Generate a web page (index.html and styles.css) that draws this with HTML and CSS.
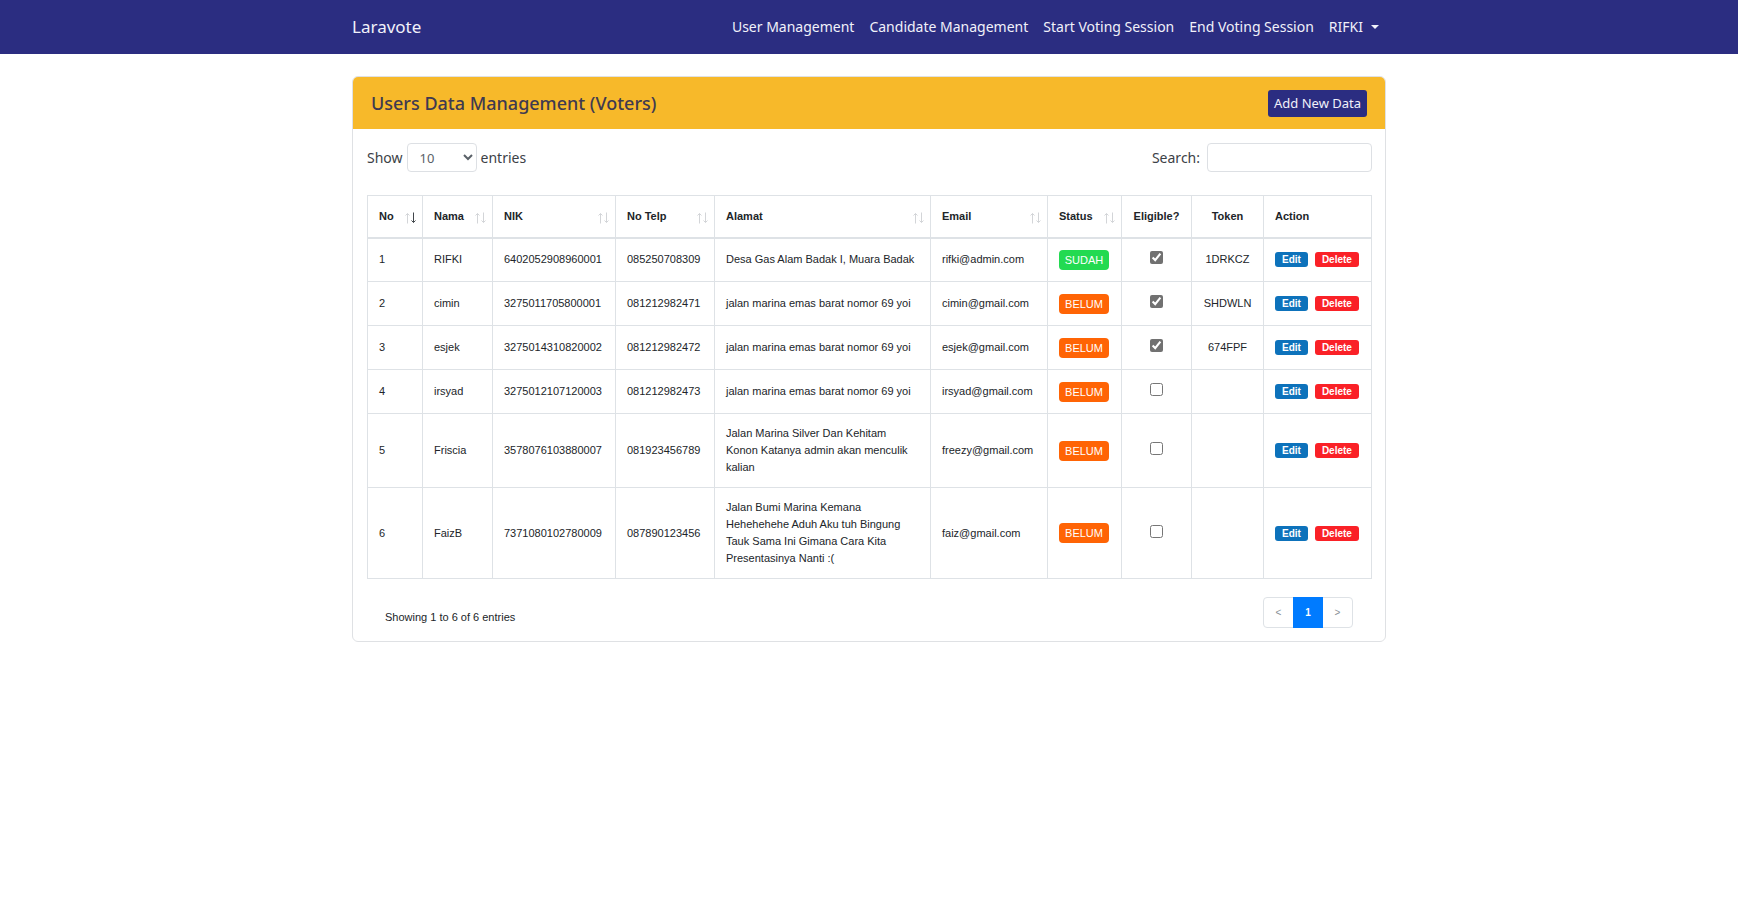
FILE: index.html
```html
<!DOCTYPE html>
<html lang="en">
<head>
<meta charset="utf-8">
<meta name="viewport" content="width=device-width, initial-scale=1">
<title>Laravote</title>
<link rel="stylesheet" href="styles.css">
</head>
<body>
<svg class="defs" width="0" height="0" aria-hidden="true">
  <symbol id="sort" viewBox="0 0 11 12">
    <path class="up" d="M2.5 11.5V1.5M.5 3.5l2-2 2 2"/>
    <path class="down" d="M8.5 .5v10M6.5 8.5l2 2 2-2"/>
  </symbol>
</svg>
<header class="navbar">
  <div class="container navbar-inner">
    <a class="brand" href="#">Laravote</a>
    <nav class="nav">
      <a href="#">User Management</a>
      <a href="#">Candidate Management</a>
      <a href="#">Start Voting Session</a>
      <a href="#">End Voting Session</a>
      <a class="account" href="#">RIFKI <span class="caret"></span></a>
    </nav>
  </div>
</header>
<main class="container">
  <section class="card">
    <div class="card-header">
      <h1>Users Data Management (Voters)</h1>
      <button class="add" type="button">Add New Data</button>
    </div>
    <div class="card-body">
      <div class="controls">
        <label>Show
          <select><option>10</option><option>25</option><option>50</option></select>
          entries</label>
        <label class="search">Search: <input type="search"></label>
      </div>
      <table>
        <colgroup>
          <col class="c-no"><col class="c-name"><col class="c-nik"><col class="c-phone"><col class="c-address">
          <col class="c-email"><col class="c-status"><col class="c-eligible"><col class="c-token"><col class="c-action">
        </colgroup>
        <thead>
          <tr>
            <th><div class="sortable sorted">No <svg><use href="#sort"/></svg></div></th>
            <th><div class="sortable">Nama <svg><use href="#sort"/></svg></div></th>
            <th><div class="sortable">NIK <svg><use href="#sort"/></svg></div></th>
            <th><div class="sortable">No Telp <svg><use href="#sort"/></svg></div></th>
            <th><div class="sortable">Alamat <svg><use href="#sort"/></svg></div></th>
            <th><div class="sortable">Email <svg><use href="#sort"/></svg></div></th>
            <th><div class="sortable">Status <svg><use href="#sort"/></svg></div></th>
            <th class="center">Eligible?</th>
            <th class="center">Token</th>
            <th>Action</th>
          </tr>
        </thead>
        <tbody>
          <tr>
            <td>1</td><td>RIFKI</td><td>6402052908960001</td><td>085250708309</td><td>Desa Gas Alam Badak I, Muara Badak</td><td>rifki@admin.com</td>
            <td><span class="badge done">SUDAH</span></td>
            <td class="center"><input type="checkbox" aria-label="RIFKI eligible" checked></td><td class="center">1DRKCZ</td>
            <td><div class="actions"><button class="edit" type="button">Edit</button><button class="delete" type="button">Delete</button></div></td>
          </tr>
          <tr>
            <td>2</td><td>cimin</td><td>3275011705800001</td><td>081212982471</td><td>jalan marina emas barat nomor 69 yoi</td><td>cimin@gmail.com</td>
            <td><span class="badge">BELUM</span></td>
            <td class="center"><input type="checkbox" aria-label="cimin eligible" checked></td><td class="center">SHDWLN</td>
            <td><div class="actions"><button class="edit" type="button">Edit</button><button class="delete" type="button">Delete</button></div></td>
          </tr>
          <tr>
            <td>3</td><td>esjek</td><td>3275014310820002</td><td>081212982472</td><td>jalan marina emas barat nomor 69 yoi</td><td>esjek@gmail.com</td>
            <td><span class="badge">BELUM</span></td>
            <td class="center"><input type="checkbox" aria-label="esjek eligible" checked></td><td class="center">674FPF</td>
            <td><div class="actions"><button class="edit" type="button">Edit</button><button class="delete" type="button">Delete</button></div></td>
          </tr>
          <tr>
            <td>4</td><td>irsyad</td><td>3275012107120003</td><td>081212982473</td><td>jalan marina emas barat nomor 69 yoi</td><td>irsyad@gmail.com</td>
            <td><span class="badge">BELUM</span></td>
            <td class="center"><input type="checkbox" aria-label="irsyad eligible"></td><td class="center"></td>
            <td><div class="actions"><button class="edit" type="button">Edit</button><button class="delete" type="button">Delete</button></div></td>
          </tr>
          <tr>
            <td>5</td><td>Friscia</td><td>3578076103880007</td><td>081923456789</td><td>Jalan Marina Silver Dan Kehitam Konon Katanya admin akan menculik kalian</td><td>freezy@gmail.com</td>
            <td><span class="badge">BELUM</span></td>
            <td class="center"><input type="checkbox" aria-label="Friscia eligible"></td><td class="center"></td>
            <td><div class="actions"><button class="edit" type="button">Edit</button><button class="delete" type="button">Delete</button></div></td>
          </tr>
          <tr>
            <td>6</td><td>FaizB</td><td>7371080102780009</td><td>087890123456</td><td>Jalan Bumi Marina Kemana Hehehehehe Aduh Aku tuh Bingung Tauk Sama Ini Gimana Cara Kita Presentasinya Nanti :(</td><td>faiz@gmail.com</td>
            <td><span class="badge">BELUM</span></td>
            <td class="center"><input type="checkbox" aria-label="FaizB eligible"></td><td class="center"></td>
            <td><div class="actions"><button class="edit" type="button">Edit</button><button class="delete" type="button">Delete</button></div></td>
          </tr>
        </tbody>
      </table>
      <div class="table-footer">
        <p>Showing 1 to 6 of 6 entries</p>
        <nav class="pagination" aria-label="Pages">
          <a href="#" aria-label="Previous">&lt;</a>
          <a class="active" href="#" aria-current="page">1</a>
          <a href="#" aria-label="Next">&gt;</a>
        </nav>
      </div>
    </div>
  </section>
</main>
</body>
</html>
```

FILE: styles.css
```css
* { box-sizing: border-box; }

body {
  margin: 0;
  background: #fff;
  color: #212529;
  font: 14px/20px "Noto Sans", "Open Sans", sans-serif;
}

a { color: inherit; text-decoration: none; }
button, input, select { font: inherit; }
.defs { position: absolute; }

.container { max-width: 1034px; margin: 0 auto; }

.navbar { background: #2b2d81; color: #f1f1fa; }
.navbar-inner { display: flex; align-items: center; justify-content: space-between; height: 54px; }
.brand { font-size: 17px; line-height: 22px; }
.nav { display: flex; gap: 15px; padding-right: 7px; }
.account { display: flex; align-items: center; gap: 8px; }
.caret { border: 4px solid transparent; border-top-color: currentColor; border-bottom: 0; }

.card { margin-top: 22px; border: 1px solid #dfe1e4; border-radius: 6px; }
.card-header {
  display: flex;
  align-items: center;
  justify-content: space-between;
  padding: 12px 18px;
  border-radius: 5px 5px 0 0;
  background: #f7b92a;
}
.card-header h1 { margin: 0; color: #3f3a50; font-size: 18px; font-weight: 500; line-height: 28px; }
.add {
  height: 27px;
  padding: 0 6px;
  border: 0;
  border-radius: 3px;
  background: #2b2d81;
  color: #f1f1fa;
  font-size: 13px;
}

.card-body { padding: 14px 13px 13px 14px; }
.controls { display: flex; justify-content: space-between; margin-bottom: 23px; color: #3c4146; }
.controls label { display: flex; align-items: center; gap: 4px; }
.controls .search { gap: 7px; }
.controls select, .controls input {
  height: 29px;
  border: 1px solid #dde0e4;
  border-radius: 4px;
  background: #fff;
  color: #5a6168;
}
.controls select { width: 70px; padding: 0 0 0 8px; font-size: 13px; }
.controls input { width: 165px; }

table {
  width: 100%;
  border-collapse: collapse;
  table-layout: fixed;
  font: 11px/17px "Liberation Sans", Arial, sans-serif;
}
.c-no { width: 55px; }
.c-name { width: 70px; }
.c-nik { width: 123px; }
.c-phone { width: 99px; }
.c-address { width: 216px; }
.c-email { width: 117px; }
.c-status { width: 74px; }
.c-eligible { width: 70px; }
.c-token { width: 72px; }
.c-action { width: 108px; }
th, td { height: 44px; padding: 11px; border: 1px solid #dee2e6; text-align: left; vertical-align: middle; }
th { height: 42px; padding: 11px 6px 11px 11px; border-bottom-width: 2px; }
th.center, .center { padding-right: 0; padding-left: 0; text-align: center; }
td:nth-child(7) { padding-top: 0; padding-bottom: 0; }

.sortable { display: flex; align-items: center; justify-content: space-between; white-space: nowrap; }
.sortable svg { width: 11px; height: 12px; margin-top: 4px; fill: none; stroke: #d3d5d8; color: #d3d5d8; }
.down { stroke: currentColor; }
.sortable.sorted svg { color: #41464b; }

.badge { display: block; width: 50px; border-radius: 4px; background: #ff6405; color: #fff; line-height: 20px; text-align: center; }
.badge.done { background: #23da51; }
td input { display: block; width: 13px; height: 13px; margin: 0 auto 4px; accent-color: #717171; }
.actions { display: flex; gap: 7px; }
.actions button {
  height: 15px;
  padding: 0 7px;
  border: 0;
  border-radius: 3px;
  color: #fff;
  font-size: 10px;
  font-weight: 700;
  line-height: 15px;
}
.edit { background: #0d72bb; }
.delete { background: #fa2127; }

.table-footer {
  display: flex;
  align-items: center;
  justify-content: space-between;
  margin-top: 18px;
  padding: 0 19px 0 18px;
  font: 11px/17px "Liberation Sans", Arial, sans-serif;
}
.table-footer p { margin: 9px 0 0; }
.pagination { display: flex; border: 1px solid #dee2e6; border-radius: 4px; color: #8a9096; font-size: 10px; }
.pagination a { width: 29px; line-height: 29px; text-align: center; }
.pagination .active { width: 30px; margin: -1px 0; background: #007bff; color: #fff; font-weight: 700; line-height: 31px; }
```
